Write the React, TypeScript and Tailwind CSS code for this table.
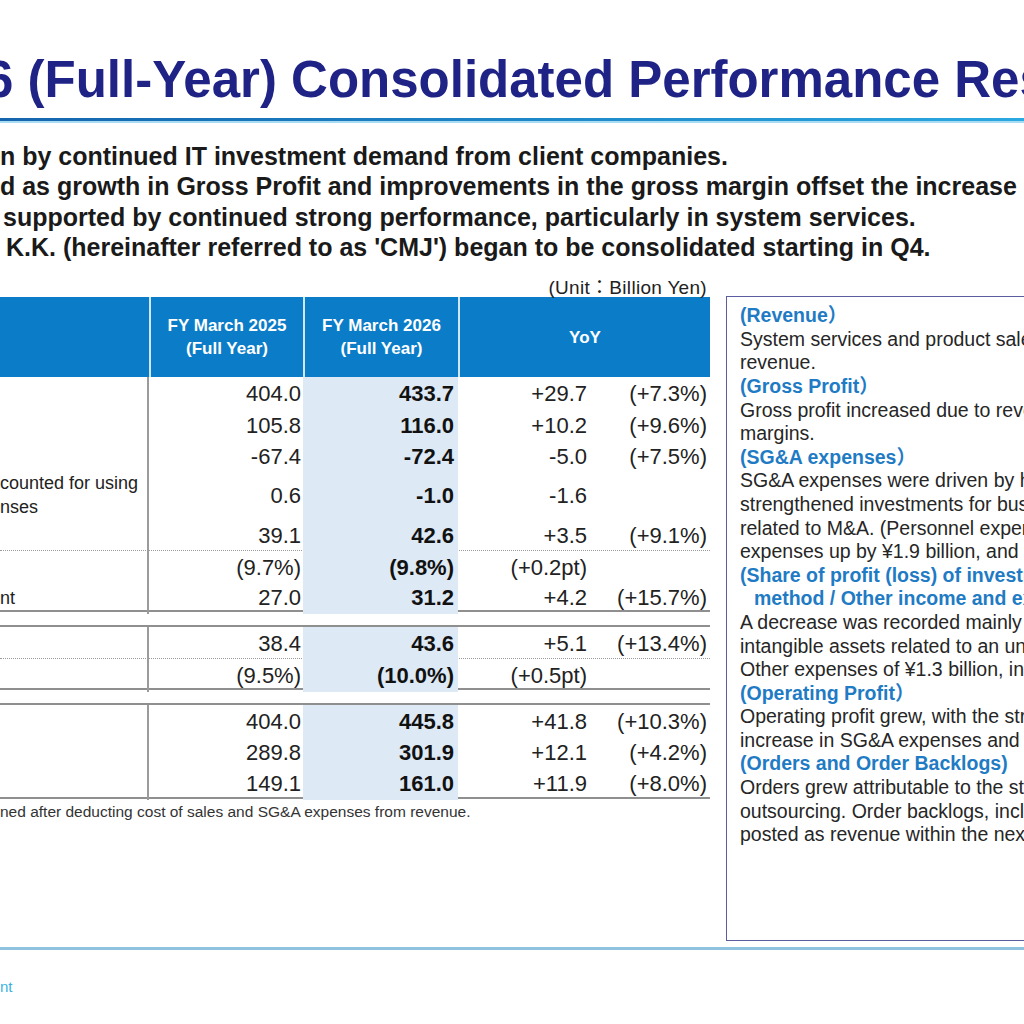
import React from "react";

type Row = {
  label?: string[];
  a: string;
  b: string;
  c: string;
  d: string;
  h: string;
  dot?: boolean;
};

const sections: Row[][] = [
  [
    { a: "404.0", b: "433.7", c: "+29.7", d: "(+7.3%)", h: "h-[32px]" },
    { a: "105.8", b: "116.0", c: "+10.2", d: "(+9.6%)", h: "h-[31px]" },
    { a: "-67.4", b: "-72.4", c: "-5.0", d: "(+7.5%)", h: "h-[31px]" },
    { label: ["counted for using", "nses"], a: "0.6", b: "-1.0", c: "-1.6", d: "", h: "h-[48px]" },
    { a: "39.1", b: "42.6", c: "+3.5", d: "(+9.1%)", h: "h-[31px]" },
    { a: "(9.7%)", b: "(9.8%)", c: "(+0.2pt)", d: "", h: "h-[31px]", dot: true },
    { label: ["nt"], a: "27.0", b: "31.2", c: "+4.2", d: "(+15.7%)", h: "h-[29px]" },
  ],
  [
    { a: "38.4", b: "43.6", c: "+5.1", d: "(+13.4%)", h: "h-[31px]" },
    { a: "(9.5%)", b: "(10.0%)", c: "(+0.5pt)", d: "", h: "h-[30px]", dot: true },
  ],
  [
    { a: "404.0", b: "445.8", c: "+41.8", d: "(+10.3%)", h: "h-[31px]" },
    { a: "289.8", b: "301.9", c: "+12.1", d: "(+4.2%)", h: "h-[31px]" },
    { a: "149.1", b: "161.0", c: "+11.9", d: "(+8.0%)", h: "h-[30px]" },
  ],
];

const notes: { text: string; head?: boolean; indent?: boolean }[] = [
  { text: "(Revenue）", head: true },
  { text: "System services and product sales both grew, driving an increase in" },
  { text: "revenue." },
  { text: "(Gross Profit）", head: true },
  { text: "Gross profit increased due to revenue growth and improved profit" },
  { text: "margins." },
  { text: "(SG&A expenses）", head: true },
  { text: "SG&A expenses were driven by higher personnel expenses from" },
  { text: "strengthened investments for business expansion, as well as expenses" },
  { text: "related to M&A. (Personnel expenses up by ¥2.4 billion, M&A-related" },
  { text: "expenses up by ¥1.9 billion, and others)" },
  { text: "(Share of profit (loss) of investments accounted for using the equity", head: true },
  { text: "method / Other income and expenses）", head: true, indent: true },
  { text: "A decrease was recorded mainly due to an impairment loss on" },
  { text: "intangible assets related to an unconsolidated subsidiary, recorded in" },
  { text: "Other expenses of ¥1.3 billion, in addition to other factors." },
  { text: "(Operating Profit）", head: true },
  { text: "Operating profit grew, with the strong gross profit growth offsetting the" },
  { text: "increase in SG&A expenses and other expenses." },
  { text: "(Orders and Order Backlogs)", head: true },
  { text: "Orders grew attributable to the strong demand for system development and" },
  { text: "outsourcing. Order backlogs, including amounts expected to be" },
  { text: "posted as revenue within the next fiscal year, also increased." },
];

const DataRow = ({ row }: { row: Row }) => (
  <div
    className={`grid grid-cols-[149px_154px_155px_137px_115px] text-[22px] text-[#222] ${row.h} ${
      row.dot ? "border-t border-dotted border-[#9a9a9a]" : ""
    }`}
  >
    <div className="flex flex-col justify-center overflow-hidden whitespace-nowrap border-r-2 border-[#9b9b9b] text-[18px] leading-[24px]">
      {row.label?.map((l) => (
        <span key={l}>{l}</span>
      ))}
    </div>
    <div className="flex items-center justify-end pr-[2px]">{row.a}</div>
    <div className="flex items-center justify-end bg-[#dde9f5] pr-[4px] font-bold text-[#111]">
      {row.b}
    </div>
    <div className="flex items-center justify-end pr-[8px]">{row.c}</div>
    <div className="flex items-center justify-end pr-[3px]">{row.d}</div>
  </div>
);

export default function App() {
  return (
    <div className="h-[1024px] w-[1024px] overflow-hidden bg-white font-['Liberation_Sans','Noto_Sans_CJK_JP',sans-serif]">
      <h1 className="ml-[-15px] mt-[54px] whitespace-nowrap text-[51px] font-bold leading-[52px] text-[#1f2386]">
        6 (Full-Year) Consolidated Performance Results
      </h1>
      <div className="mt-[12px] h-[3px] bg-gradient-to-r from-[#1565ad] to-[#2aa8e0]" />
      <div className="h-[2px] bg-[#a9dcf2]" />

      <div className="mt-[18px] whitespace-nowrap text-[25px] font-bold leading-[30.3px] text-[#1a1a1a]">
        <p>n by continued IT investment demand from client companies.</p>
        <p>d as growth in Gross Profit and improvements in the gross margin offset the increase in SG&amp;A expenses.</p>
        <p className="pl-[3px]">supported by continued strong performance, particularly in system services.</p>
        <p className="pl-[6px]">K.K. (hereinafter referred to as 'CMJ') began to be consolidated starting in Q4.</p>
      </div>

      <div className="mt-[17px] flex items-start gap-[16px]">
        <div className="w-[710px] shrink-0">
          <div className="h-[18px] pr-[3px] text-right text-[19px] leading-[18px] tracking-[0.3px] text-[#222]">
            (Unit：Billion Yen)
          </div>
          <div className="grid h-[80px] grid-cols-[149px_154px_155px_252px] bg-[#0b7dc8] text-[17px] font-bold leading-[23px] text-white">
            <div />
            <div className="flex flex-col items-center justify-center border-l-2 border-[#cfe7f7]">
              <span>FY March 2025</span>
              <span>(Full Year)</span>
            </div>
            <div className="flex flex-col items-center justify-center border-l-2 border-[#cfe7f7]">
              <span>FY March 2026</span>
              <span>(Full Year)</span>
            </div>
            <div className="flex items-center justify-center border-l-2 border-[#cfe7f7]">
              YoY
            </div>
          </div>
          <div className="border-b-2 border-[#8f8f8f]">
            {sections[0].map((r, i) => (
              <DataRow key={i} row={r} />
            ))}
          </div>
          <div className="mt-[13px] border-y-2 border-[#8f8f8f]">
            {sections[1].map((r, i) => (
              <DataRow key={i} row={r} />
            ))}
          </div>
          <div className="mt-[13px] border-y-2 border-[#8f8f8f]">
            {sections[2].map((r, i) => (
              <DataRow key={i} row={r} />
            ))}
          </div>
          <p className="mt-[4px] whitespace-nowrap text-[15.5px] leading-[18px] text-[#333]">
            ned after deducting cost of sales and SG&amp;A expenses from revenue.
          </p>
        </div>

        <div className="mt-[17px] h-[645px] w-[420px] shrink-0 border border-[#5a5da0] pl-[13px] pt-[7px] text-[19.5px] leading-[23.6px] text-[#262626]">
          {notes.map((n, i) => (
            <div
              key={i}
              className={`whitespace-nowrap ${n.head ? "font-bold text-[#1f7bc4]" : ""} ${
                n.indent ? "pl-[14px]" : ""
              }`}
            >
              {n.text}
            </div>
          ))}
        </div>
      </div>

      <div className="mt-[6px] h-[3px] bg-[#8fc2df]" />
      <p className="mt-[28px] text-[15px] leading-[18px] text-[#3ab3e3]">nt</p>
    </div>
  );
}
